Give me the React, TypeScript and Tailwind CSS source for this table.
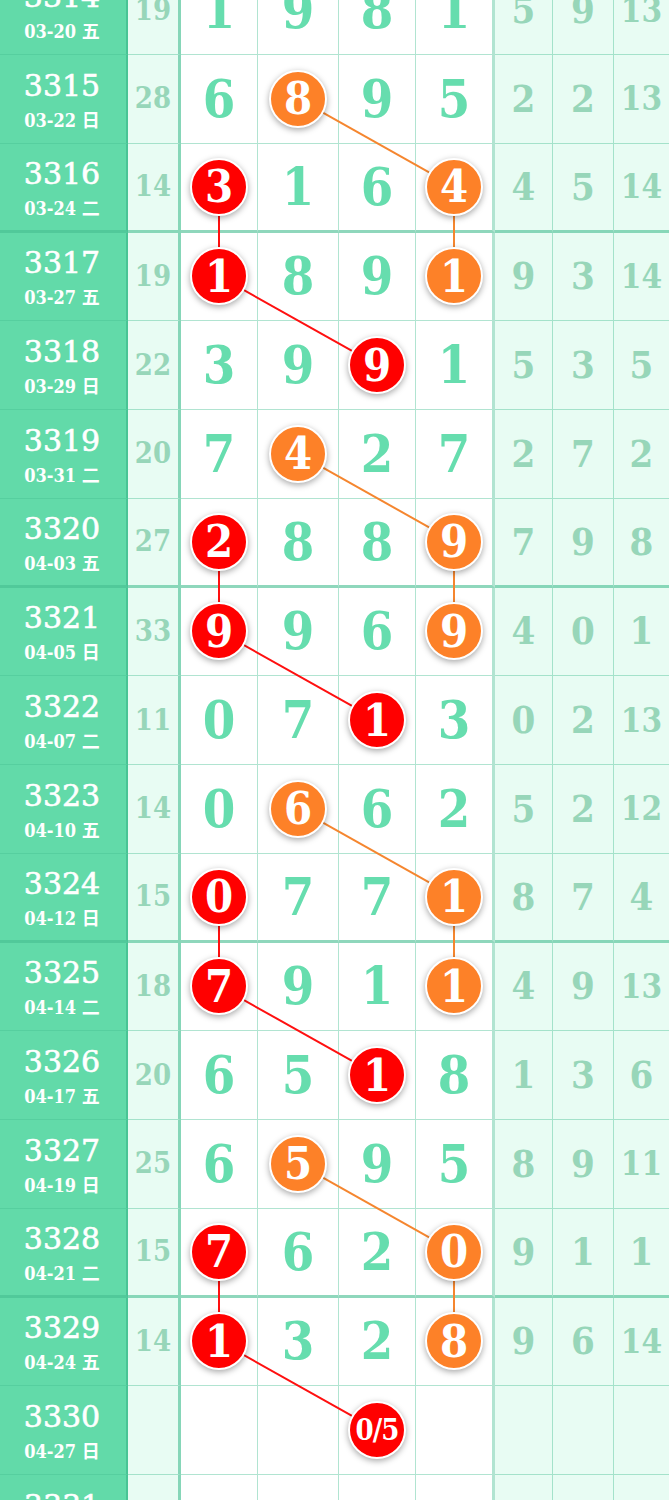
import React from "react"

type Row = {
  n: number
  d: string
  s?: number
  v: (number | null)[]
  r: (number | null)[]
  red?: number
  orange?: number
  redText?: string
}

const rows: Row[] = [
  { n: 3314, d: "03-20 五", s: 19, v: [1, 9, 8, 1], r: [5, 9, 13] },
  { n: 3315, d: "03-22 日", s: 28, v: [6, 8, 9, 5], r: [2, 2, 13], orange: 1 },
  { n: 3316, d: "03-24 二", s: 14, v: [3, 1, 6, 4], r: [4, 5, 14], red: 0, orange: 3 },
  { n: 3317, d: "03-27 五", s: 19, v: [1, 8, 9, 1], r: [9, 3, 14], red: 0, orange: 3 },
  { n: 3318, d: "03-29 日", s: 22, v: [3, 9, 9, 1], r: [5, 3, 5], red: 2 },
  { n: 3319, d: "03-31 二", s: 20, v: [7, 4, 2, 7], r: [2, 7, 2], orange: 1 },
  { n: 3320, d: "04-03 五", s: 27, v: [2, 8, 8, 9], r: [7, 9, 8], red: 0, orange: 3 },
  { n: 3321, d: "04-05 日", s: 33, v: [9, 9, 6, 9], r: [4, 0, 1], red: 0, orange: 3 },
  { n: 3322, d: "04-07 二", s: 11, v: [0, 7, 1, 3], r: [0, 2, 13], red: 2 },
  { n: 3323, d: "04-10 五", s: 14, v: [0, 6, 6, 2], r: [5, 2, 12], orange: 1 },
  { n: 3324, d: "04-12 日", s: 15, v: [0, 7, 7, 1], r: [8, 7, 4], red: 0, orange: 3 },
  { n: 3325, d: "04-14 二", s: 18, v: [7, 9, 1, 1], r: [4, 9, 13], red: 0, orange: 3 },
  { n: 3326, d: "04-17 五", s: 20, v: [6, 5, 1, 8], r: [1, 3, 6], red: 2 },
  { n: 3327, d: "04-19 日", s: 25, v: [6, 5, 9, 5], r: [8, 9, 11], orange: 1 },
  { n: 3328, d: "04-21 二", s: 15, v: [7, 6, 2, 0], r: [9, 1, 1], red: 0, orange: 3 },
  { n: 3329, d: "04-24 五", s: 14, v: [1, 3, 2, 8], r: [9, 6, 14], red: 0, orange: 3 },
  { n: 3330, d: "04-27 日", v: [null, null, null, null], r: [null, null, null], red: 2, redText: "0/5" },
  { n: 3331, d: "04-29 二", v: [null, null, null, null], r: [null, null, null] },
]

const ROW_H = 88.75
const COL_X = [219, 298, 377, 454]

const isThick = (n: number) => (n - 3316) % 4 === 0

const serifC = "font-['DejaVu_Serif_Condensed','DejaVu_Serif','Noto_Sans_CJK_SC',sans-serif] [font-stretch:condensed]"

function Ball({ kind, text }: { kind: "red" | "orange"; text: string }) {
  const small = text.length > 1
  return (
    <div
      className={
        (kind === "red" ? "bg-[#ff0000] " : "bg-[#fd8128] ") +
        "relative z-10 flex h-[58px] w-[58px] items-center justify-center rounded-full border-2 border-white shadow-[0_2px_6px_rgba(0,0,0,0.35)]"
      }
    >
      <span className={`${serifC} font-bold leading-none text-white ${small ? "text-[29px] tracking-[-1px]" : "text-[45px]"}`}>
        {text}
      </span>
    </div>
  )
}

function ChartRow({ row }: { row: Row }) {
  const thick = isThick(row.n)
  // every 4th row gets the heavier divider
  const bb = thick ? "border-b-[3px] border-b-[rgba(70,190,145,0.6)]" : "border-b border-b-[rgba(70,190,145,0.42)]"
  const digitWidths = ["w-[77px] border-r", "w-[81px] border-r", "w-[77px] border-r", "w-[79px] border-r-[3px] border-r-[rgba(70,190,145,0.6)]"]
  const rightWidths = ["w-[58px] border-r", "w-[61px] border-r", "flex-1"]

  return (
    <div className="flex h-[88.75px]">
      <div className={`flex w-[128px] shrink-0 flex-col items-center justify-center border-r-2 border-r-[rgba(50,175,130,0.5)] bg-[#62daa9] pt-1 pr-[2px] text-white ${bb}`}>
        <div className="font-['DejaVu_Serif',serif] text-[30px] leading-[36px] [-webkit-text-stroke:0.6px_white]">{row.n}</div>
        <div className={`${serifC} mt-1 text-[18px] font-bold leading-[26px]`}>{row.d}</div>
      </div>
      <div className={`flex w-[53px] shrink-0 items-center justify-center border-r-[3px] border-r-[rgba(70,190,145,0.6)] bg-[#e8fcf3] ${bb}`}>
        <span className={`${serifC} text-[29px] font-bold leading-none text-[#97d6b9]`}>{row.s ?? ""}</span>
      </div>
      {row.v.map((val, ci) => {
        let content: React.ReactNode = null
        if (row.red === ci) content = <Ball kind="red" text={row.redText ?? String(val)} />
        else if (row.orange === ci) content = <Ball kind="orange" text={String(val)} />
        else if (val !== null)
          content = <span className={`${serifC} text-[52px] font-bold leading-none text-[#66ddae]`}>{val}</span>
        return (
          <div
            key={ci}
            className={`flex shrink-0 items-center justify-center border-r-[rgba(70,190,145,0.42)] bg-white ${digitWidths[ci]} ${bb}`}
          >
            {content}
          </div>
        )
      })}
      {row.r.map((val, ci) => (
        <div
          key={ci}
          className={`flex items-center justify-center border-r-[rgba(70,190,145,0.42)] bg-[#e8fcf3] ${rightWidths[ci]} ${bb}`}
        >
          {val !== null && (
            <span className={`${serifC} font-bold leading-none text-[#97d6b9] ${val > 9 ? "text-[33px]" : "text-[38px]"}`}>
              {val}
            </span>
          )}
        </div>
      ))}
    </div>
  )
}

function centerY(i: number) {
  const bw = isThick(rows[i].n) ? 3 : 1
  return i * ROW_H + (ROW_H - bw) / 2
}

function Lines() {
  const segs: { x1: number; y1: number; x2: number; y2: number; c: string }[] = []
  for (let i = 0; i < rows.length - 1; i++) {
    const a = rows[i]
    const b = rows[i + 1]
    if (a.red !== undefined && b.red !== undefined)
      segs.push({ x1: COL_X[a.red], y1: centerY(i), x2: COL_X[b.red], y2: centerY(i + 1), c: "#ff1010" })
    if (a.orange !== undefined && b.orange !== undefined)
      segs.push({ x1: COL_X[a.orange], y1: centerY(i), x2: COL_X[b.orange], y2: centerY(i + 1), c: "#f5862f" })
  }
  return (
    <svg className="pointer-events-none absolute left-0 top-0 z-[5]" width={669} height={rows.length * ROW_H}>
      {segs.map((s, k) => (
        <line key={k} x1={s.x1} y1={s.y1} x2={s.x2} y2={s.y2} stroke={s.c} strokeWidth={2} />
      ))}
    </svg>
  )
}

export default function App() {
  return (
    <div className="h-[1500px] w-[669px] overflow-hidden bg-white">
      <div className="relative mt-[-33.75px]">
        {rows.map((row) => (
          <ChartRow key={row.n} row={row} />
        ))}
        <Lines />
      </div>
    </div>
  )
}
